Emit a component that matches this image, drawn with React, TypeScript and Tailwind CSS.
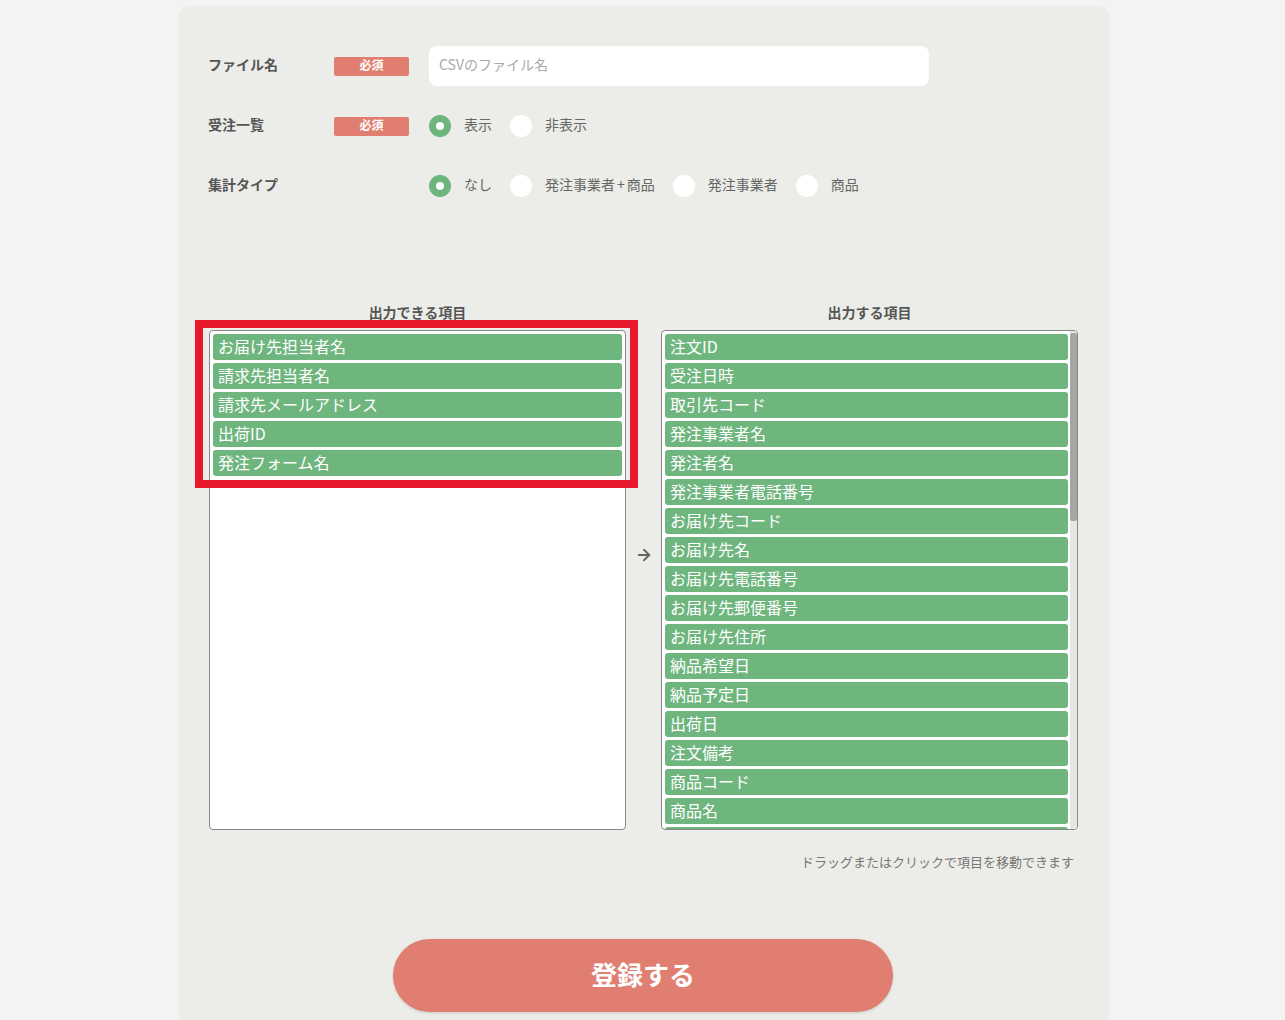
import React from "react";
import { ArrowRight } from "lucide-react";

const FONT = { fontFamily: '"Noto Sans CJK JP", "Noto Sans", sans-serif' };

const leftItems = ["お届け先担当者名", "請求先担当者名", "請求先メールアドレス", "出荷ID", "発注フォーム名"];
const rightItems = [
  "注文ID",
  "受注日時",
  "取引先コード",
  "発注事業者名",
  "発注者名",
  "発注事業者電話番号",
  "お届け先コード",
  "お届け先名",
  "お届け先電話番号",
  "お届け先郵便番号",
  "お届け先住所",
  "納品希望日",
  "納品予定日",
  "出荷日",
  "注文備考",
  "商品コード",
  "商品名",
];

function Badge() {
  return (
    <div className="flex h-[19px] w-[75px] items-center justify-center rounded-[2px] bg-[#e07f71] pb-[2px] text-[12px] font-bold leading-none text-white">
      必須
    </div>
  );
}

function Radio({ checked, label }: { checked?: boolean; label: React.ReactNode }) {
  return (
    <div className="mr-[18px] flex items-center">
      {checked ? (
        <div className="flex h-[22px] w-[22px] items-center justify-center rounded-full bg-[#6db57c]">
          <div className="h-[8px] w-[8px] rounded-full bg-white" />
        </div>
      ) : (
        <div className="h-[22px] w-[22px] rounded-full bg-white" />
      )}
      <span className="ml-[13px] pb-[3px] text-[14px] text-[#666]">{label}</span>
    </div>
  );
}

function Item({ text }: { text: string }) {
  return (
    <div className="mb-[3px] h-[26px] shrink-0 truncate rounded-[3px] bg-[#6eb57e] px-[5px] pb-[2px] text-[16px] leading-[25px] text-white">
      {text}
    </div>
  );
}

export default function App() {
  return (
    <div className="h-[1020px] overflow-hidden bg-[#f2f3f2]" style={FONT}>
      <div className="ml-[179px] mt-[6px] h-[1100px] w-[930px] rounded-t-[9px] bg-[#ecede8] px-[29px] pt-[40px]">
        {/* Row 1 */}
        <div className="flex h-[40px] items-center">
          <div className="w-[126px] pb-[3px] text-[14px] font-bold text-[#555]">ファイル名</div>
          <Badge />
          <div className="ml-[20px] flex h-[40px] w-[500px] items-center rounded-[8px] bg-white px-[10px] pb-[3px] text-[14px] text-[#aaa]">
            CSVのファイル名
          </div>
        </div>
        {/* Row 2 */}
        <div className="mt-[20px] flex h-[40px] items-center">
          <div className="w-[126px] pb-[3px] text-[14px] font-bold text-[#555]">受注一覧</div>
          <Badge />
          <div className="ml-[20px] flex items-center">
            <Radio checked label="表示" />
            <Radio label="非表示" />
          </div>
        </div>
        {/* Row 3 */}
        <div className="mt-[20px] flex h-[40px] items-center">
          <div className="w-[221px] pb-[3px] text-[14px] font-bold text-[#555]">集計タイプ</div>
          <div className="flex items-center">
            <Radio checked label="なし" />
            <Radio
              label={
                <>
                  発注事業者<span className="mx-[2px]">+</span>商品
                </>
              }
            />
            <Radio label="発注事業者" />
            <Radio label="商品" />
          </div>
        </div>

        {/* Lists */}
        <div className="ml-[1px] mt-[97px] flex items-start">
          <div className="relative flex w-[417px] flex-col">
            <div className="h-[18px] pb-[2px] text-center text-[14px] font-bold leading-[18px] text-[#555]">出力できる項目</div>
            <div className="mt-[9px] flex h-[500px] flex-col rounded-[4px] border border-[#888] bg-white p-[3px]">
              {leftItems.map((t) => (
                <Item key={t} text={t} />
              ))}
            </div>
            <div className="absolute left-[-14px] top-[17px] h-[168px] w-[443px] border-[8px] border-[#e8192c]" />
          </div>

          <div className="flex w-[35px] justify-center pt-[243px]">
            <ArrowRight size={18} strokeWidth={2.5} className="text-[#666]" />
          </div>

          <div className="flex w-[417px] flex-col">
            <div className="h-[18px] pb-[2px] text-center text-[14px] font-bold leading-[18px] text-[#555]">出力する項目</div>
            <div className="mt-[9px] flex h-[500px] overflow-hidden rounded-[4px] border border-[#888] bg-white">
              <div className="flex flex-1 flex-col overflow-hidden p-[3px] pr-[2px]">
                {rightItems.map((t) => (
                  <Item key={t} text={t} />
                ))}
                <div className="h-[26px] shrink-0 rounded-[3px] bg-[#6eb57e]" />
              </div>
              <div className="flex w-[7px] flex-col bg-[#e6e6e6]">
                <div className="mt-[2px] h-[188px] rounded-[2px] bg-[#a6a6a6]" />
              </div>
            </div>
          </div>
        </div>

        <div className="mr-[6px] mt-[22px] text-right text-[13px] text-[#777]">
          ドラッグまたはクリックで項目を移動できます
        </div>

        <div className="mt-[67px] flex justify-center">
          <button className="ml-[-2px] h-[73px] w-[500px] rounded-full bg-[#e07f71] pb-[4px] text-[26px] font-bold text-white shadow-[0_1px_3px_rgba(0,0,0,0.15)]">
            登録する
          </button>
        </div>
      </div>
    </div>
  );
}
